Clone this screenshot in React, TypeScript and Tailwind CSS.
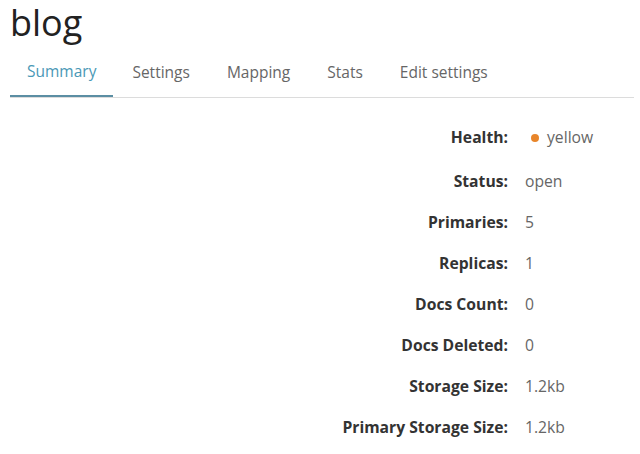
import React from 'react'

const tabs = ['Summary', 'Settings', 'Mapping', 'Stats', 'Edit settings']

const rows: { label: string; value: string; dot?: boolean }[] = [
  { label: 'Health:', value: 'yellow', dot: true },
  { label: 'Status:', value: 'open' },
  { label: 'Primaries:', value: '5' },
  { label: 'Replicas:', value: '1' },
  { label: 'Docs Count:', value: '0' },
  { label: 'Docs Deleted:', value: '0' },
  { label: 'Storage Size:', value: '1.2kb' },
  { label: 'Primary Storage Size:', value: '1.2kb' },
]

export default function App() {
  return (
    <div
      className="w-[640px] h-[454px] bg-white pl-[10px] pr-[6px] pt-[1px] overflow-hidden"
      style={{ fontFamily: '"Open Sans", "Liberation Sans", sans-serif' }}
    >
      {/* タイトル */}
      <h1 className="text-[36px] leading-[50px] -mt-[3px] mb-[1px] text-[#222] font-normal">blog</h1>

      {/* タブ */}
      <div className="flex border-b border-[#dcdcdc]">
        {tabs.map((t, i) => (
          <div
            key={t}
            className={
              i === 0
                ? 'h-[48px] flex items-center px-[17px] -mb-px border-b-2 border-[#5b8ea3] text-[15.5px] text-[#4a98b6]'
                : 'h-[48px] flex items-center pl-[19px] pr-[18px] text-[15.5px] text-[#666]'
            }
          >
            {t}
          </div>
        ))}
      </div>

      {/* サマリー */}
      <div className="mt-[19px] grid grid-cols-[498px_1fr] gap-x-[17px]">
        {rows.map((r, i) => (
          <React.Fragment key={r.label}>
            <div
              className={
                'h-[41px] flex items-center justify-end text-[15.7px] font-bold text-[#333]' +
                (i === 0 ? ' mb-[3px]' : '')
              }
            >
              {r.label}
            </div>
            <div
              className={
                'h-[41px] flex items-center text-[15.7px] text-[#666]' + (i === 0 ? ' mb-[3px]' : '')
              }
            >
              {r.dot && <span className="ml-[6px] mr-[8px] w-[8px] h-[8px] rounded-full bg-[#e8852a]" />}
              {r.value}
            </div>
          </React.Fragment>
        ))}
      </div>
    </div>
  )
}
